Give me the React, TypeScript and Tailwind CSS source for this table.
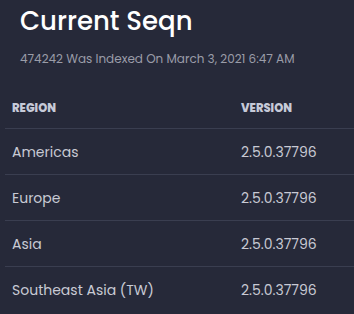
const ROWS = [
  { region: "Americas", version: "2.5.0.37796" },
  { region: "Europe", version: "2.5.0.37796" },
  { region: "Asia", version: "2.5.0.37796" },
  { region: "Southeast Asia (TW)", version: "2.5.0.37796" },
]

export default function App() {
  return (
    <div className="h-[314px] w-[354px] overflow-hidden bg-[#262939] font-['Poppins','Noto_Sans',sans-serif]">
      <div className="px-5 pt-[3px]">
        <h1 className="text-[26px] leading-[36px] font-medium text-white">Current Seqn</h1>
        <p className="mt-[12px] text-[12px] leading-[16px] text-[#9a9ca8]">
          474242 Was Indexed On March 3, 2021 6:47 AM
        </p>
      </div>

      <table className="mt-[20px] ml-[5px] w-[349px] border-collapse text-left">
        <thead>
          <tr className="border-b border-[#3a3e50]">
            <th className="h-[41px] pt-[3px] pl-[7px] text-[11.5px] font-extrabold text-[#c6cad8]">
              REGION
            </th>
            <th className="w-[113px] pt-[3px] text-[11.5px] font-extrabold text-[#c6cad8]">
              VERSION
            </th>
          </tr>
        </thead>
        <tbody>
          {ROWS.map((r, i) => (
            <tr key={r.region} className={i < ROWS.length - 1 ? "border-b border-[#3a3e50]" : ""}>
              <td className="h-[46px] pt-[2px] pl-[7px] text-[14px] text-[#c8cad4]">{r.region}</td>
              <td className="pt-[2px] text-[14px] text-[#c8cad4]">{r.version}</td>
            </tr>
          ))}
        </tbody>
      </table>
    </div>
  )
}
